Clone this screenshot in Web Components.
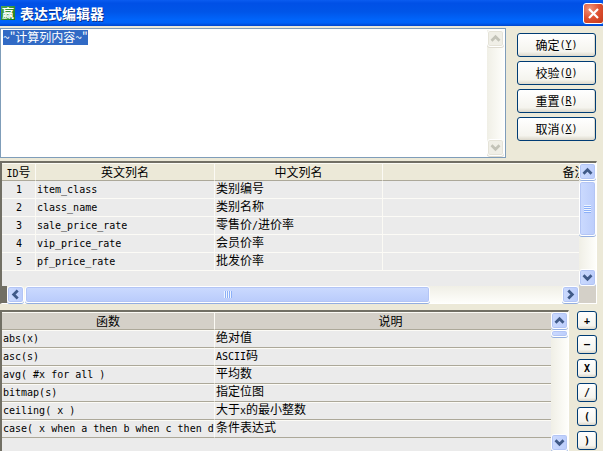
<!DOCTYPE html>
<html lang="zh-CN">
<head>
<meta charset="utf-8">
<title>表达式编辑器</title>
<style>
html, body { height: 100%; margin: 0; overflow: hidden; }
body {
  --mono: "DejaVu Sans Mono", "Liberation Mono", monospace;
  font: 12px/18px "Noto Sans CJK SC", sans-serif;
  color: #000; background: #ece9d8;
}
</style>
</head>
<body>
<expression-editor></expression-editor>

<script>
const define = (name, html, setup) => {
  const template = document.createElement('template');
  template.innerHTML = html;
  customElements.define(name, class extends HTMLElement {
    connectedCallback() {
      if (this.shadowRoot) return;
      const root = this.attachShadow({ mode: 'open' });
      root.append(template.content.cloneNode(true));
      if (setup) setup(this, root);
    }
  });
};

/* Half-width runs are set in the monospaced face, the rest in the CJK face. */
const fill = (cell, text) => {
  for (const part of text.split(/([\x20-\x7e]+)/).filter(Boolean)) {
    if (/^[\x20-\x7e]/.test(part)) {
      const span = document.createElement('span');
      span.className = 'latin';
      span.textContent = part;
      cell.append(span);
    } else cell.append(part);
  }
};

define('xp-titlebar', `
<style>
:host { display: flex; align-items: center; gap: 5px; height: 26px; flex: none; box-sizing: border-box; padding-left: 1px;
  background: linear-gradient(#0a5cf0 0, #0050e6 12%, #0055e8 45%, #0064fa 75%, #0062f8 88%, #0045cc 100%); }
.logo { width: 14px; height: 14px; display: grid; place-items: center;
  background: linear-gradient(135deg, #53a64e, #167b19); color: #fff; font-size: 12px; font-weight: 700; line-height: 14px; }
h1 { margin: 0; flex: 1; color: #fff; font-size: 14px; line-height: 20px; font-weight: 700; text-shadow: 1px 1px #0b2f8c; }
button { width: 21px; height: 21px; padding: 0; margin-right: -1px; border: 1px solid #fff; border-radius: 3px;
  background: radial-gradient(circle at 30% 25%, #f0947a, #dd5030 50%, #c53818); }
svg { display: block; margin: auto; }
</style>
<span class="logo">赢</span>
<h1><slot></slot></h1>
<button type="button" aria-label="关闭"><svg width="15" height="15" viewBox="0 0 15 15"><path d="M3 3l9 9M12 3l-9 9" stroke="#fff" stroke-width="2.2"/></svg></button>`);

define('xp-button', `
<style>
:host { display: block; }
button { width: 100%; height: 24px; padding: 0; display: flex; align-items: center; justify-content: center;
  border: 1px solid #003c74; border-radius: 3px; color: #000; font: inherit; line-height: 18px;
  background: linear-gradient(#fff, #f5f4ee 80%, #dcd8cb); box-shadow: inset -1px -1px #dedbd0; }
:host([small]) button { height: 19px; font: 700 10px/16px var(--mono); }
::slotted(span) { font: 10px/18px var(--mono); }
</style>
<button type="button"><slot></slot></button>`);

define('xp-scrollbar', `
<style>
:host { display: flex; flex-direction: column; width: 17px; background: linear-gradient(90deg, #f0efe6, #fefefb); }
:host([horizontal]) { flex-direction: row; width: auto; height: 17px; background: linear-gradient(#f0efe6, #fefefb); }
button, .thumb { box-sizing: border-box; border: 1px solid #fff; border-radius: 3px; box-shadow: inset 0 0 0 1px #b3c5f5, 0 1px #93aee0;
  background: linear-gradient(90deg, #cbdafe, #bccdfb); }
:host([horizontal]) .thumb { background: linear-gradient(#cbdafe, #b9cbfb); }
button { width: 17px; height: 17px; padding: 0; flex: none; color: #405a88; }
svg { display: block; margin: auto; }
.down { transform: rotate(180deg); }
:host([horizontal]) .up { transform: rotate(-90deg); } :host([horizontal]) .down { transform: rotate(90deg); }
.track { flex: 1; min-height: 0; min-width: 0; display: flex; flex-direction: inherit; }
.thumb { flex: 0 0 var(--thumb, 0px); display: grid; place-items: center; overflow: hidden; margin-top: 1px; }
:host([horizontal]) .thumb { margin: 0 0 0 1px; }
.grip { width: 7px; height: 8px; background: repeating-linear-gradient(#eef4fe 0 1px, #8cb0f8 1px 2px); }
:host([horizontal]) .grip { width: 8px; height: 7px; background: repeating-linear-gradient(90deg, #eef4fe 0 1px, #8cb0f8 1px 2px); }
:host([plain]) .grip, :host([disabled]) .thumb { display: none; }
:host([disabled]) button { color: #c3c3b8; background: #f0efe7; border-color: #fff; box-shadow: inset 0 0 0 1px #e5e3d8, 0 1px #dedbd0; }
</style>
<button type="button" aria-label="向前滚动"><svg class="up" width="13" height="13" viewBox="0 0 13 13"><path d="M2.5 8.7L6.5 4.7l4 4" fill="none" stroke="currentColor" stroke-width="2.8"/></svg></button>
<div class="track"><div class="thumb"><div class="grip"></div></div></div>
<button type="button" aria-label="向后滚动"><svg class="down" width="13" height="13" viewBox="0 0 13 13"><path d="M2.5 8.7L6.5 4.7l4 4" fill="none" stroke="currentColor" stroke-width="2.8"/></svg></button>`,
(host, root) => {
  if (host.hasAttribute('disabled')) root.querySelectorAll('button').forEach(b => { b.disabled = true; });
});

define('expression-field', `
<style>
:host { display: flex; box-sizing: border-box; border: 1px solid #7f9db9; padding: 1px; background: #fff; }
textarea { flex: 1; min-width: 0; border: 0; outline: 0; padding: 0 1px; margin: 0; resize: none; overflow: hidden;
  font: inherit; line-height: 14px; color: #000; background: #fff; }
textarea::selection { background: #316ac5; color: #fff; }
</style>
<textarea aria-label="表达式" spellcheck="false">~"计算列内容~"</textarea>
<xp-scrollbar disabled></xp-scrollbar>`,
(host, root) => {
  const area = root.querySelector('textarea');
  area.focus();
  area.select();
});

define('data-grid', `
<style>
:host { display: block; min-width: 0; overflow: hidden; background: #ebebeb; }
table { table-layout: fixed; border-collapse: separate; border-spacing: 0; width: 0; }
th, td { box-sizing: border-box; height: 18px; padding: 0; font-weight: 400; line-height: 16px; text-align: left; white-space: pre;
  border-right: 1px solid #fbfaf4; border-bottom: 1px solid #fcfbf6; }
td { padding: 0 0 3px 1px; line-height: 14px; }
th { text-align: center; background: #ece9d8; border-bottom-color: #aca899; box-shadow: inset 0 1px #fbfaf4; }
.latin { font: 10px/10px var(--mono); }
:host([numbered]) td:first-child { text-align: center; }
:host([ruled]) th { background: #d4d0c8; }
:host([ruled]) td { border-bottom-color: #aca899; box-shadow: inset 0 1px #fcfbf6; }
</style>
<table><colgroup></colgroup><thead><tr></tr></thead><tbody></tbody></table>`,
(host, root) => {
  const { widths, heads, rows } = grids[host.getAttribute('name')];
  widths.forEach(w => {
    const col = document.createElement('col');
    col.style.width = w + 'px';
    root.querySelector('colgroup').append(col);
  });
  heads.forEach(h => {
    const th = document.createElement('th');
    th.scope = 'col';
    fill(th, h);
    root.querySelector('thead tr').append(th);
  });
  rows.forEach(r => {
    const tr = root.querySelector('tbody').insertRow();
    r.forEach(c => fill(tr.insertCell(), c));
  });
});

const grids = {
  columns: {
    widths: [34, 179, 168, 384],
    heads: ['ID号', '英文列名', '中文列名', '备注'],
    rows: [
      ['1', 'item_class', '类别编号', ''],
      ['2', 'class_name', '类别名称', ''],
      ['3', 'sale_price_rate', '零售价/进价率', ''],
      ['4', 'vip_price_rate', '会员价率', ''],
      ['5', 'pf_price_rate', '批发价率', '']
    ]
  },
  functions: {
    widths: [213, 352],
    heads: ['函数', '说明'],
    rows: [
      ['abs(x)', '绝对值'],
      ['asc(s)', 'ASCII码'],
      ['avg( #x for all )', '平均数'],
      ['bitmap(s)', '指定位图'],
      ['ceiling( x )', '大于x的最小整数'],
      ['case( x when a then b when c then d', '条件表达式']
    ]
  }
};

define('expression-editor', `
<style>
:host { display: flex; flex-direction: column; height: 100vh; background: #ece9d8; }
.top { display: flex; gap: 11px; padding: 2px 7px 3px 0; }
expression-field { flex: 1; height: 130px; }
.actions { flex: 0 0 79px; display: flex; flex-direction: column; gap: 4px; padding-top: 5px; }
.panel { display: grid; grid-template-columns: 1fr 17px; border: solid; border-width: 2px 1px 1px 2px;
  border-color: #716f64 #fff #fff #716f64; }
.columns { margin-right: 6px; grid-template-rows: 123px 17px; }
.columns .across { display: flex; min-width: 0; }
.split { flex: 0 0 5px; background: #716f64; }
.across xp-scrollbar { flex: 1; --thumb: 405px; }
.corner { background: #d4d0c8; }
.columns > xp-scrollbar { --thumb: 55px; }
.bottom { flex: 1; min-height: 0; display: flex; gap: 8px; padding: 6px 6px 0 0; }
.functions { flex: 1; min-width: 0; border-bottom: 0; grid-template-rows: minmax(0, 1fr); }
.functions > xp-scrollbar { --thumb: 7px; }
.operators { flex: 0 0 20px; display: flex; flex-direction: column; gap: 5px; padding-top: 1px; }
</style>
<xp-titlebar>表达式编辑器</xp-titlebar>
<section class="top">
  <expression-field></expression-field>
  <div class="actions">
    <xp-button>确定<span>(<u>Y</u>)</span></xp-button>
    <xp-button>校验<span>(<u>O</u>)</span></xp-button>
    <xp-button>重置<span>(<u>R</u>)</span></xp-button>
    <xp-button>取消<span>(<u>X</u>)</span></xp-button>
  </div>
</section>
<section class="panel columns">
  <data-grid name="columns" numbered></data-grid>
  <xp-scrollbar></xp-scrollbar>
  <div class="across"><div class="split"></div><xp-scrollbar horizontal></xp-scrollbar></div>
  <div class="corner"></div>
</section>
<section class="bottom">
  <div class="panel functions">
    <data-grid name="functions" ruled></data-grid>
    <xp-scrollbar plain></xp-scrollbar>
  </div>
  <div class="operators">
    <xp-button small>+</xp-button>
    <xp-button small>—</xp-button>
    <xp-button small>X</xp-button>
    <xp-button small>/</xp-button>
    <xp-button small>(</xp-button>
    <xp-button small>)</xp-button>
  </div>
</section>`);
</script>
</body>
</html>
